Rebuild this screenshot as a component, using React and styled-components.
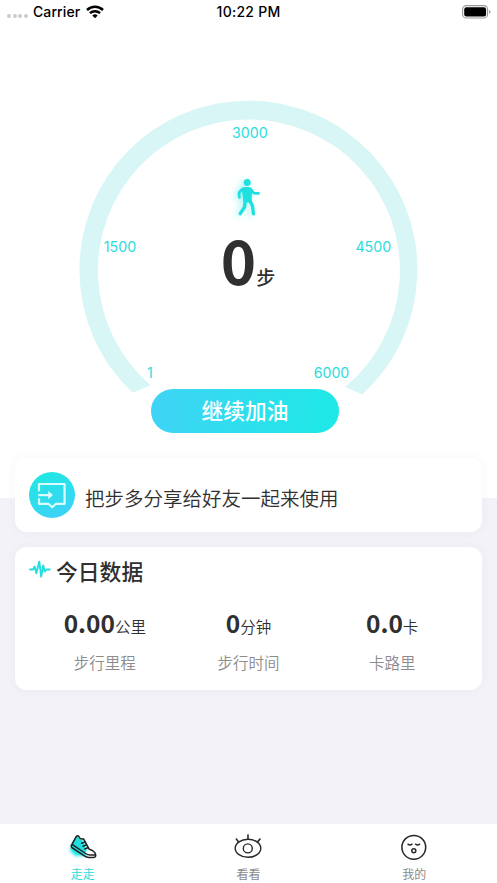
import styled, { createGlobalStyle } from "styled-components";

const stats = [
  { value: "0.00", unit: "公里", label: "步行里程" },
  { value: "0", unit: "分钟", label: "步行时间" },
  { value: "0.0", unit: "卡", label: "卡路里" },
];

const marks = [
  { text: "3000", x: 249.8, y: 138 },
  { text: "1500", x: 120, y: 252 },
  { text: "4500", x: 373.3, y: 252 },
  { text: "1", x: 150, y: 378 },
  { text: "6000", x: 331.5, y: 378 },
];

const WifiIcon = () => (
  <svg width="18" height="14" viewBox="0 0 18 14" fill="none" stroke="#000" strokeWidth="2.5">
    <path d="M1 5 A11.6 11.6 0 0 1 17 5" />
    <path d="M3.9 8.2 A7.4 7.4 0 0 1 14.1 8.2" />
    <path d="M9 13.2 L6.3 10.4 A4 4 0 0 1 11.7 10.4 Z" fill="#000" stroke="none" />
  </svg>
);

const BatteryIcon = () => (
  <svg width="30" height="14" viewBox="0 0 30 14">
    <rect x="0.6" y="0.6" width="25" height="12.4" rx="3.8" fill="none" stroke="#999" strokeWidth="1.1" />
    <rect x="2.2" y="2.2" width="21.9" height="9.2" rx="2.2" />
    <path d="M27.2 5 Q28.6 5.4 28.6 6.8 Q28.6 8.2 27.2 8.7 Z" fill="#999" />
  </svg>
);

const WalkIcon = () => (
  <svg width="30" height="44" viewBox="0 0 30 44" fill="none" stroke="#20dfe0" strokeLinecap="round" strokeLinejoin="round">
    <circle cx="14.2" cy="6.6" r="3.5" fill="#20dfe0" stroke="none" />
    <path d="M8.6 12.6 Q9.8 11 12 11 H15.6 Q17.8 11 19.2 13.4 L18.6 24.5 L17 26.5 H11.3 L10.3 24 Z" fill="#20dfe0" stroke="none" />
    <path d="M10.6 12.8 Q6.4 15 6 17.6 L6.4 21.4" strokeWidth="2.8" />
    <path d="M17.6 13.2 L20.8 17.1 L25.6 17.3" strokeWidth="2.7" />
    <path d="M12.2 24 L11.6 31 L7.2 37.6" strokeWidth="3.4" />
    <path d="M16.6 24 L19.6 30.2 L20.4 37.8" strokeWidth="3.3" />
  </svg>
);

const ShareIcon = () => (
  <svg width="46" height="46" viewBox="0 0 46 46" fill="none" stroke="#d9fcff" strokeWidth="2.2">
    <path d="M10 19.3 V12 H35.6 V31.8 H27 L23.2 35.2 L19.4 31.8 H10 V26.3" strokeLinejoin="round" />
    <path d="M9.2 23.1 H22.5" />
    <path d="M19.2 19 L24 23.1 L19.2 27.2 Z" fill="#d9fcff" stroke="none" />
  </svg>
);

const PulseIcon = () => (
  <svg width="22" height="20" viewBox="0 0 22 20" fill="none" stroke="#20dfe0" strokeWidth="1.9" strokeLinecap="round" strokeLinejoin="round">
    <path d="M1 10.5 H4 L5.7 7.5 L7.3 14.2 L10.3 2.6 L12.2 17.6 L14.2 6.5 L15.8 12.5 L17.5 10.5 H20.7" />
  </svg>
);

const ShoeIcon = () => (
  <svg width="30" height="28" viewBox="0 0 30 28" fill="none" stroke="#202020" strokeWidth="1.5" strokeLinejoin="round" strokeLinecap="round">
    <defs>
      <filter id="shoeGlow" x="-40%" y="-40%" width="180%" height="180%">
        <feGaussianBlur stdDeviation="1.6" />
      </filter>
    </defs>
    <path d="M6 8 L17 9 L19 23 L7 23 L1.5 17 Z" fill="#20e6e6" stroke="none" filter="url(#shoeGlow)" />
    <path d="M4 10 L8.4 3 L14.5 7.5 L18.5 19.5 L3.2 14 Z" fill="#20dfe0" stroke="none" />
    <path d="M20.5 17 Q19 18.5 17.5 20.3 Q21 22.6 27 21.8 Q26 18 21.3 16.3 Z" fill="#fff" stroke="none" />
    <path d="M3.2 12.8 L8.2 3.7 Q9.5 1.7 11 3.7 Q12.3 6.8 15.5 5.8 L21.3 16.3 Q27.8 18.4 27.7 22.6 Q27.5 24.8 24.5 24.4 H21 Q18.5 24.4 16 22.6 L3.7 14.5 Z" />
    <path d="M4.5 11.7 L17.5 20.5 Q20 22.2 23 22 H27" />
    <path d="M16.5 9.1 L13.6 10.2 M18 12 L15.1 13.2 M19.7 14.8 L16.8 16" />
  </svg>
);

const EyeIcon = () => (
  <svg width="30" height="28" viewBox="0 0 30 28" fill="none" stroke="#282828" strokeWidth="1.4" strokeLinecap="round">
    <ellipse cx="15" cy="15.3" rx="12.8" ry="9" />
    <circle cx="14.8" cy="15.4" r="4.5" />
    <path d="M15 6 V2 M5.6 8.9 L3.3 6.1 M24.5 8.9 L27 6.1" strokeWidth="1.6" />
  </svg>
);

const FaceIcon = () => (
  <svg width="30" height="28" viewBox="0 0 30 28" fill="none" stroke="#282828" strokeWidth="1.5" strokeLinecap="round">
    <circle cx="14.8" cy="14.3" r="11.9" />
    <path d="M9 11.2 Q11 12.7 13 11.2 M16.6 11.2 Q18.6 12.7 20.6 11.2" />
    <circle cx="14.8" cy="17.8" r="2" />
  </svg>
);

const tabs = [
  { text: "走走", Icon: ShoeIcon, active: true },
  { text: "看看", Icon: EyeIcon },
  { text: "我的", Icon: FaceIcon },
];

const App = () => (
  <Page>
    <GlobalStyle />
    <Top>
      <StatusBar>
        <Carrier>
          <Dots><i /><i /><i /><i /></Dots>
          <span>Carrier</span>
          <WifiIcon />
        </Carrier>
        <Clock>10:22 PM</Clock>
        <Battery><BatteryIcon /></Battery>
      </StatusBar>
      <Gauge>
        <Dial viewBox="0 24 497 372">
          <path
            fill="#d8f6f6"
            d="M132.7 392.8 A169 169 0 1 1 362.4 394.4 L345 387 A151 151 0 1 0 150.7 385.2 Z"
          />
          {marks.map(({ text, x, y }) => (
            <Mark key={text} x={x} y={y}>{text}</Mark>
          ))}
        </Dial>
        <Steps>
          <Walker><WalkIcon /></Walker>
          <Count>0<small>步</small></Count>
        </Steps>
      </Gauge>
      <GoButton>继续加油</GoButton>
    </Top>
    <Cards>
      <ShareCard>
        <ShareBadge><ShareIcon /></ShareBadge>
        <ShareText>把步多分享给好友一起来使用</ShareText>
      </ShareCard>
      <DataCard>
        <DataTitle><PulseIcon />今日数据</DataTitle>
        <Stats>
          {stats.map(({ value, unit, label }) => (
            <Stat key={label}>
              <Value>{value}<small>{unit}</small></Value>
              <Label>{label}</Label>
            </Stat>
          ))}
        </Stats>
      </DataCard>
    </Cards>
    <TabBar>
      {tabs.map(({ text, Icon, active }) => (
        <Tab key={text} $active={active}>
          <Icon />
          <span>{text}</span>
        </Tab>
      ))}
    </TabBar>
  </Page>
);

export default App;

const GlobalStyle = createGlobalStyle`
  * {
    box-sizing: border-box;
  }
  body {
    margin: 0;
    font-family: "Noto Sans CJK SC", sans-serif;
    color: #303030;
  }
  svg {
    display: block;
    flex: none;
  }
`
const Page = styled.div`
  display: flex;
  flex-direction: column;
  width: 497px;
  height: 883px;
  overflow: hidden;
  background: #f3f2f8;
`
const Top = styled.header`
  flex: none;
  height: 498px;
  background: #fff;
`
const StatusBar = styled.div`
  display: grid;
  grid-template-columns: 1fr auto 1fr;
  align-items: center;
  height: 24px;
  font: 500 14px/24px Inter, sans-serif;
  color: #000;
`
const Carrier = styled.div`
  display: flex;
  align-items: center;
  gap: 5.5px;
  padding-left: 7px;
  letter-spacing: 0.1px;
`
const Dots = styled.div`
  display: flex;
  gap: 1.5px;
  padding-top: 8px;
  i {
    width: 4px;
    height: 4px;
    border-radius: 50%;
    background: #ccc;
  }
`
const Clock = styled.span`
  letter-spacing: 0.25px;
`
const Battery = styled.div`
  display: flex;
  justify-content: flex-end;
  padding-right: 5px;
`
const Gauge = styled.div`
  display: grid;
  height: 365px;
  > * {
    grid-area: 1 / 1;
  }
`
const Dial = styled.svg`
  width: 497px;
  height: 372px;
`
const Mark = styled.text`
  font: 400 14.2px Inter, sans-serif;
  text-anchor: middle;
  fill: #2bdcdc;
`
const Steps = styled.div`
  display: flex;
  flex-direction: column;
  align-items: center;
  padding-top: 152px;
`
const Walker = styled.div`
  padding-right: 1px;
  filter: drop-shadow(-3px 1px 3px #20e6e666);
`
const Count = styled.div`
  margin-top: 2px;
  padding-right: 1px;
  font-size: 60px;
  line-height: 74px;
  font-weight: 700;
  small {
    font-size: 19px;
    font-weight: 500;
  }
`
const GoButton = styled.button`
  display: block;
  width: 188px;
  height: 44px;
  margin: 0 0 0 151px;
  padding: 0 0 2px;
  border: none;
  border-radius: 22px;
  background: linear-gradient(100deg, #40d3f5, #1de9e6);
  color: #fff;
  font: 500 21.7px/42px "Noto Sans CJK SC", sans-serif;
`
const Cards = styled.main`
  display: flex;
  flex-direction: column;
  gap: 15px;
  margin: -40px 15px 0;
  flex: 1;
`
const Card = styled.section`
  border-radius: 12px;
  background: #fff;
  box-shadow: 0 0 12px rgba(80, 70, 120, 0.045);
`
const ShareCard = styled(Card)`
  display: flex;
  align-items: center;
  gap: 10px;
  height: 74px;
  padding: 0 14px;
`
const ShareBadge = styled.div`
  width: 46px;
  height: 46px;
  border-radius: 50%;
  background: linear-gradient(160deg, #1de9e0, #40d0fa);
`
const ShareText = styled.span`
  padding-top: 6px;
  font-size: 19.5px;
  line-height: 30px;
  font-weight: 350;
`
const DataCard = styled(Card)`
  height: 143px;
  padding: 9px 14px 0;
`
const DataTitle = styled.h2`
  display: flex;
  gap: 5px;
  margin: 0;
  font-size: 21.8px;
  line-height: 30px;
  font-weight: 500;
  svg {
    margin-top: 3px;
  }
`
const Stats = styled.div`
  display: grid;
  grid-template-columns: repeat(3, 1fr);
  margin: 19px 4px 0;
`
const Stat = styled.div`
  text-align: center;
`
const Value = styled.div`
  font-size: 24.5px;
  line-height: 36px;
  font-weight: 700;
  white-space: nowrap;
  small {
    font-size: 15.5px;
    font-weight: 350;
  }
`
const Label = styled.div`
  margin-top: 6px;
  font-size: 15.5px;
  line-height: 24px;
  font-weight: 350;
  color: #8c8c8c;
`
const TabBar = styled.nav`
  display: grid;
  grid-template-columns: repeat(3, 1fr);
  flex: none;
  height: 59px;
  background: #fff;
`
const Tab = styled.div`
  display: flex;
  flex-direction: column;
  align-items: center;
  padding-top: 9px;
  font-size: 12px;
  line-height: 18px;
  color: ${({ $active }) => ($active ? "#2bdcdc" : "#8a8a8a")};
  span {
    margin-top: 4px;
  }
`
